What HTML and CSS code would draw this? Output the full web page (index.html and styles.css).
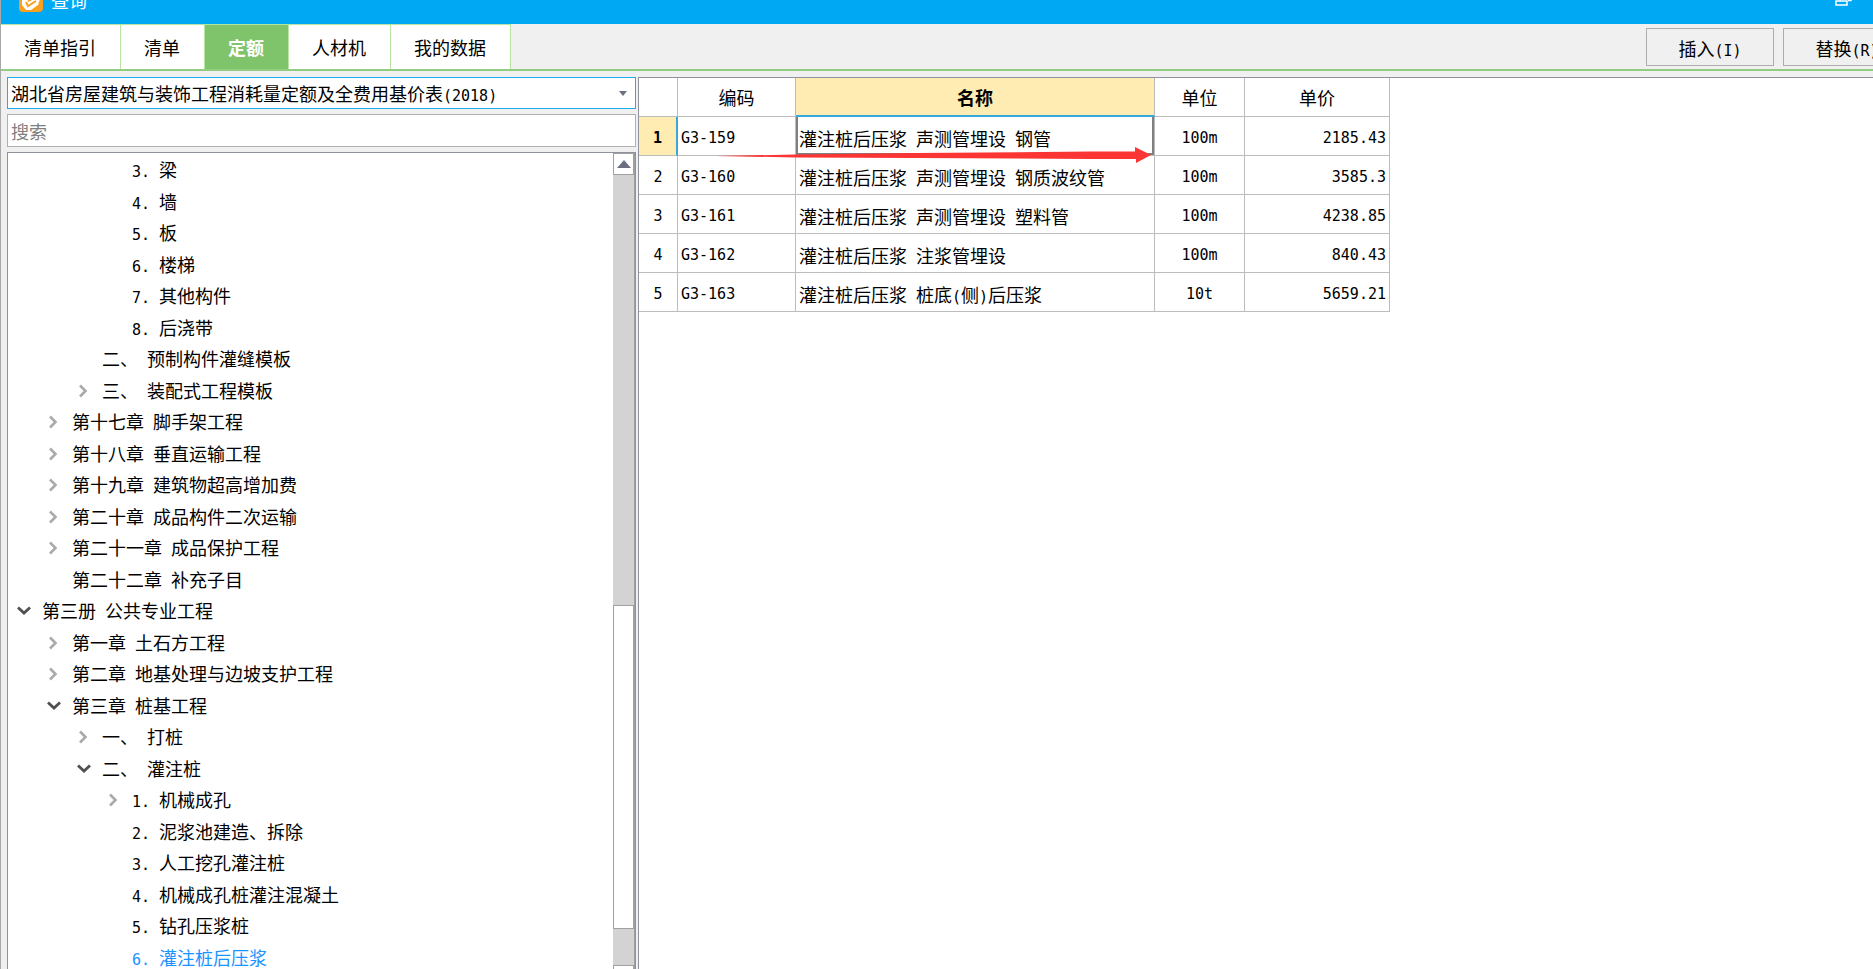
FILE: index.html
```html
<!DOCTYPE html>
<html lang="zh-CN">
<head>
<meta charset="utf-8">
<title>查询</title>
<link rel="stylesheet" href="styles.css">
</head>
<body>
<svg class="defs" aria-hidden="true">
  <symbol id="closed" viewBox="0 0 14 14"><path d="M3 1.5 8.5 7 3 12.5" fill="none" stroke="#aaa" stroke-width="2.6"/></symbol>
  <symbol id="open" viewBox="0 0 14 14"><path d="M1 3.5 7 9 13 3.5" fill="none" stroke="#505050" stroke-width="2.8"/></symbol>
</svg>
<div class="window">
  <header class="titlebar">
    <svg class="logo" viewBox="0 0 24 24"><rect width="24" height="24" rx="4" fill="#f9a01f"/><path d="M3 11 9 5l8 4 4 2-2 6-7 5H7l-4-5z" fill="#fff"/><path d="M7 14l2 4 8-5M9 13l6-3" fill="none" stroke="#f9a01f" stroke-width="2"/></svg>
    <h1>查询</h1>
    <svg class="restore" viewBox="0 0 18 14"><path d="M1 9h11v4H1zM5 9V2h11v6.500h-3" fill="none" stroke="#fff" stroke-width="1.500"/></svg>
  </header>
  <div class="toolbar">
    <nav class="tabs">
      <button>清单指引</button><button>清单</button><button class="active">定额</button><button>人材机</button><button>我的数据</button>
    </nav>
    <div class="actions">
      <button>插入<span class="en">(I)</span></button><button>替换<span class="en">(R)</span></button>
    </div>
  </div>
  <main class="body">
    <aside class="side">
      <button class="combo" aria-haspopup="listbox"><span>湖北省房屋建筑与装饰工程消耗量定额及全费用基价表<span class="en">(2018)</span></span><svg viewBox="0 0 8 5"><path d="M0 0h8L4 5z" fill="#6b6f80"/></svg></button>
      <input class="search" type="text" placeholder="搜索" aria-label="搜索">
      <div class="tree-box">
        <ul class="tree">
          <li class="d4"><span class="en">3. </span>梁</li>
          <li class="d4"><span class="en">4. </span>墙</li>
          <li class="d4"><span class="en">5. </span>板</li>
          <li class="d4"><span class="en">6. </span>楼梯</li>
          <li class="d4"><span class="en">7. </span>其他构件</li>
          <li class="d4"><span class="en">8. </span>后浇带</li>
          <li class="d3">二、<span class="en"> </span>预制构件灌缝模板</li>
          <li class="d3"><svg><use href="#closed"/></svg>三、<span class="en"> </span>装配式工程模板</li>
          <li class="d2"><svg><use href="#closed"/></svg>第十七章<span class="en"> </span>脚手架工程</li>
          <li class="d2"><svg><use href="#closed"/></svg>第十八章<span class="en"> </span>垂直运输工程</li>
          <li class="d2"><svg><use href="#closed"/></svg>第十九章<span class="en"> </span>建筑物超高增加费</li>
          <li class="d2"><svg><use href="#closed"/></svg>第二十章<span class="en"> </span>成品构件二次运输</li>
          <li class="d2"><svg><use href="#closed"/></svg>第二十一章<span class="en"> </span>成品保护工程</li>
          <li class="d2">第二十二章<span class="en"> </span>补充子目</li>
          <li class="d1"><svg><use href="#open"/></svg>第三册<span class="en"> </span>公共专业工程</li>
          <li class="d2"><svg><use href="#closed"/></svg>第一章<span class="en"> </span>土石方工程</li>
          <li class="d2"><svg><use href="#closed"/></svg>第二章<span class="en"> </span>地基处理与边坡支护工程</li>
          <li class="d2"><svg><use href="#open"/></svg>第三章<span class="en"> </span>桩基工程</li>
          <li class="d3"><svg><use href="#closed"/></svg>一、<span class="en"> </span>打桩</li>
          <li class="d3"><svg><use href="#open"/></svg>二、<span class="en"> </span>灌注桩</li>
          <li class="d4"><svg><use href="#closed"/></svg><span class="en">1. </span>机械成孔</li>
          <li class="d4"><span class="en">2. </span>泥浆池建造、拆除</li>
          <li class="d4"><span class="en">3. </span>人工挖孔灌注桩</li>
          <li class="d4"><span class="en">4. </span>机械成孔桩灌注混凝土</li>
          <li class="d4"><span class="en">5. </span>钻孔压浆桩</li>
          <li class="d4 current"><span class="en">6. </span>灌注桩后压浆</li>
        </ul>
        <div class="scroll">
          <button class="step" aria-label="向上"><svg viewBox="0 0 14 8"><path d="M0 8h14L7 0z" fill="#6b6f80"/></svg></button>
          <div class="track"><div class="thumb"></div></div>
          <button class="step" aria-label="向下"></button>
        </div>
      </div>
    </aside>
    <section class="content">
      <table class="grid">
        <colgroup><col class="c-no"><col class="c-code"><col class="c-name"><col class="c-unit"><col class="c-price"></colgroup>
        <thead><tr><th></th><th>编码</th><th class="hot">名称</th><th>单位</th><th>单价</th></tr></thead>
        <tbody>
          <tr class="selected"><th>1</th><td>G3-159</td><td class="name focus">灌注桩后压浆<span class="en"> </span>声测管埋设<span class="en"> </span>钢管
            <svg class="arrow" viewBox="0 0 436 16"><path d="M0 9 80 7.500 200 6 375 4.500H419V0L435 8 420 16V12L375 12 200 11 80 10.500z" fill="#fb3434"/></svg></td><td class="unit">100m</td><td class="price">2185.43</td></tr>
          <tr><th>2</th><td>G3-160</td><td class="name">灌注桩后压浆<span class="en"> </span>声测管埋设<span class="en"> </span>钢质波纹管</td><td class="unit">100m</td><td class="price">3585.3</td></tr>
          <tr><th>3</th><td>G3-161</td><td class="name">灌注桩后压浆<span class="en"> </span>声测管埋设<span class="en"> </span>塑料管</td><td class="unit">100m</td><td class="price">4238.85</td></tr>
          <tr><th>4</th><td>G3-162</td><td class="name">灌注桩后压浆<span class="en"> </span>注浆管埋设</td><td class="unit">100m</td><td class="price">840.43</td></tr>
          <tr><th>5</th><td>G3-163</td><td class="name">灌注桩后压浆<span class="en"> </span>桩底<span class="en">(</span>侧<span class="en">)</span>后压浆</td><td class="unit">10t</td><td class="price">5659.21</td></tr>
        </tbody>
      </table>
    </section>
  </main>
</div>
</body>
</html>
```
FILE: styles.css
```css
* { box-sizing: border-box; }
body { margin: 0; overflow: hidden; }
body, button, input { font: 18px/24px "Noto Sans CJK SC", sans-serif; color: #000; }
button { margin: 0; padding: 0; border-radius: 0; }
ul, h1 { margin: 0; padding: 0; }
.defs { position: absolute; width: 0; height: 0; }
.en, .grid td:not(.name), .grid tbody th { font-family: "DejaVu Sans Mono", monospace; font-size: 15px; }
.en { line-height: 1; white-space: pre; }

.window { display: flex; flex-direction: column; height: 100vh; overflow: hidden; background: #f0f0f0; border-left: 1px solid #a8a8a8; }

.titlebar { display: flex; flex: none; align-items: flex-end; height: 24px; padding: 0 11px 12px 18px; background: #00a8f3; overflow: hidden; }
.titlebar h1 { margin-left: 8px; font-size: 18px; font-weight: 400; line-height: 24px; color: #fff; }
.logo { flex: none; width: 24px; height: 24px; }
.restore { flex: none; width: 18px; height: 14px; margin: 0 9px 6px auto; }

.toolbar { display: flex; flex: none; justify-content: space-between; height: 47px; border-bottom: 2px solid #92cc80; overflow: hidden; }
.tabs { display: flex; border-top: 1px solid #b5e6a2; }
.tabs button { padding: 0 24px 0 23px; border: 0; border-right: 1px solid #b5e6a2; background: #fff; }
.tabs .active { background: #7fc36a; color: #fff; font-weight: 700; }
.actions { display: flex; gap: 9px; margin: 4px -38px 3px 0; }
.actions button { width: 128px; padding-top: 2px; border: 1px solid #adadad; background: #f0f0f0; }

.body { display: flex; flex: 1; min-height: 0; padding-top: 6px; }
.side { display: flex; flex: none; flex-direction: column; gap: 5px; width: 635px; padding-left: 6px; }
.combo { display: flex; flex: none; align-items: center; justify-content: space-between; height: 32px; padding: 0 8px 0 3px; border: 1px solid #1eaeee; background: #fff; }
.combo svg { width: 8px; height: 5px; }
.search { flex: none; width: 100%; height: 33px; padding: 0 3px; border: 1px solid #b0b0b0; border-radius: 0; background: #fff; }
.search::placeholder { color: #808080; opacity: 1; }

.tree-box { display: flex; flex: 1; min-height: 0; border: 1px solid #8f939e; border-bottom: 0; background: #fff; overflow: hidden; }
.tree { flex: 1; list-style: none; }
.tree li { height: 32px; line-height: 32px; white-space: pre; }
.tree li:nth-child(even) { height: 31px; }
.tree svg { width: 14px; height: 14px; margin: 0 11px 0 -25px; }
.d1 { padding-left: 34px; }
.d2 { padding-left: 64px; }
.d3 { padding-left: 94px; }
.d4 { padding-left: 124px; }
.current { color: #1a94ff; }

.scroll { display: flex; flex: none; flex-direction: column; width: 22px; background: #d3d3d3; border-right: 1px solid #a0a0a0; }
.step { display: flex; align-items: center; justify-content: center; flex: none; height: 22px; border: 1px solid #a0a0a0; background: #fff; }
.step:last-child { height: 4px; border-bottom: 0; }
.step svg { width: 14px; height: 8px; }
.track { display: flex; flex: 1; flex-direction: column; justify-content: flex-end; padding-bottom: 36px; }
.thumb { height: 43%; border: 1px solid #a0a0a0; background: #fff; }

.content { flex: 1; min-width: 0; margin-left: 2px; border: solid #8f939e; border-width: 1px 0 0 1px; background: #fff; }
.grid { width: 751px; table-layout: fixed; border-collapse: separate; border-spacing: 0; }
.c-no { width: 39px; }
.c-code { width: 118px; }
.c-name { width: 359px; }
.c-unit { width: 90px; }
.c-price { width: 145px; }
.grid th, .grid td { height: 39px; padding: 0 3px; border: solid #bcbcbc; border-width: 0 1px 1px 0; text-align: left; white-space: nowrap; }
.grid td, .grid tbody th { padding-top: 3px; }
.grid th { font-weight: 400; text-align: center; }
.grid .hot { background: #ffecb3; border-bottom: 2px solid #38a8d8; font-weight: 700; }
.grid .selected th { background: #ffecb3; border-right: 2px solid #38a8d8; font-weight: 700; }
.grid .focus { position: relative; box-shadow: inset 2px 0 #808080, inset -2px 0 #808080, inset 0 -2px #808080; }
.grid .unit { text-align: center; }
.grid .price { text-align: right; }
.arrow { position: absolute; right: 2px; bottom: -8px; width: 436px; height: 16px; }
```
